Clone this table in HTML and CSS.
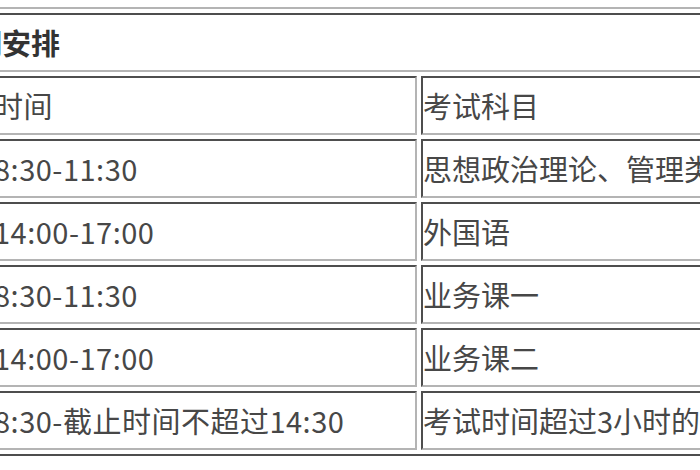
FILE: index.html
```html
<!DOCTYPE html>
<html lang="zh-CN">
<head>
<meta charset="utf-8">
<link rel="stylesheet" href="styles.css">
</head>
<body>
<div class="page">
  <table class="sched">
    <tr><td class="title" colspan="2">时间安排</td></tr>
    <tr><td class="c1">时间</td><td class="c2">考试科目</td></tr>
    <tr><td class="c1">8:30-11:30</td><td class="c2">思想政治理论、管理类联考综合能力</td></tr>
    <tr><td class="c1">14:00-17:00</td><td class="c2">外国语</td></tr>
    <tr><td class="c1">8:30-11:30</td><td class="c2">业务课一</td></tr>
    <tr><td class="c1">14:00-17:00</td><td class="c2">业务课二</td></tr>
    <tr><td class="c1">8:30-截止时间不超过14:30</td><td class="c2">考试时间超过3小时的考试科目</td></tr>
  </table>
</div>
</body>
</html>
```
FILE: styles.css
```css
html, body {
  margin: 0;
  padding: 0;
  background: #ffffff;
}
.page {
  width: 700px;
  height: 470px;
  overflow: hidden;
  padding-top: 7px;
  box-sizing: border-box;
}
.sched {
  margin-left: -73px;
  border-collapse: separate;
  border-spacing: 4px;
  border: 2px solid;
  border-color: #b4b4b4 #4e4e4e #4e4e4e #b4b4b4;
  font-family: "Noto Sans CJK SC", "Microsoft YaHei", sans-serif;
  font-size: 29px;
  color: #474747;
  white-space: nowrap;
}
.sched td {
  box-sizing: border-box;
  height: 59px;
  border: 2px solid;
  border-color: #4e4e4e #b4b4b4 #b4b4b4 #4e4e4e;
  padding: 0;
  vertical-align: middle;
  text-align: left;
  line-height: 1.2;
}
.sched .c1 {
  width: 484px;
  min-width: 484px;
  max-width: 484px;
  padding-left: 59px;
  letter-spacing: 0.5px;
}
.sched .c2 {
  width: 520px;
  min-width: 520px;
}
.sched .title {
  font-weight: bold;
  color: #333333;
  padding-left: 9px;
}
```
